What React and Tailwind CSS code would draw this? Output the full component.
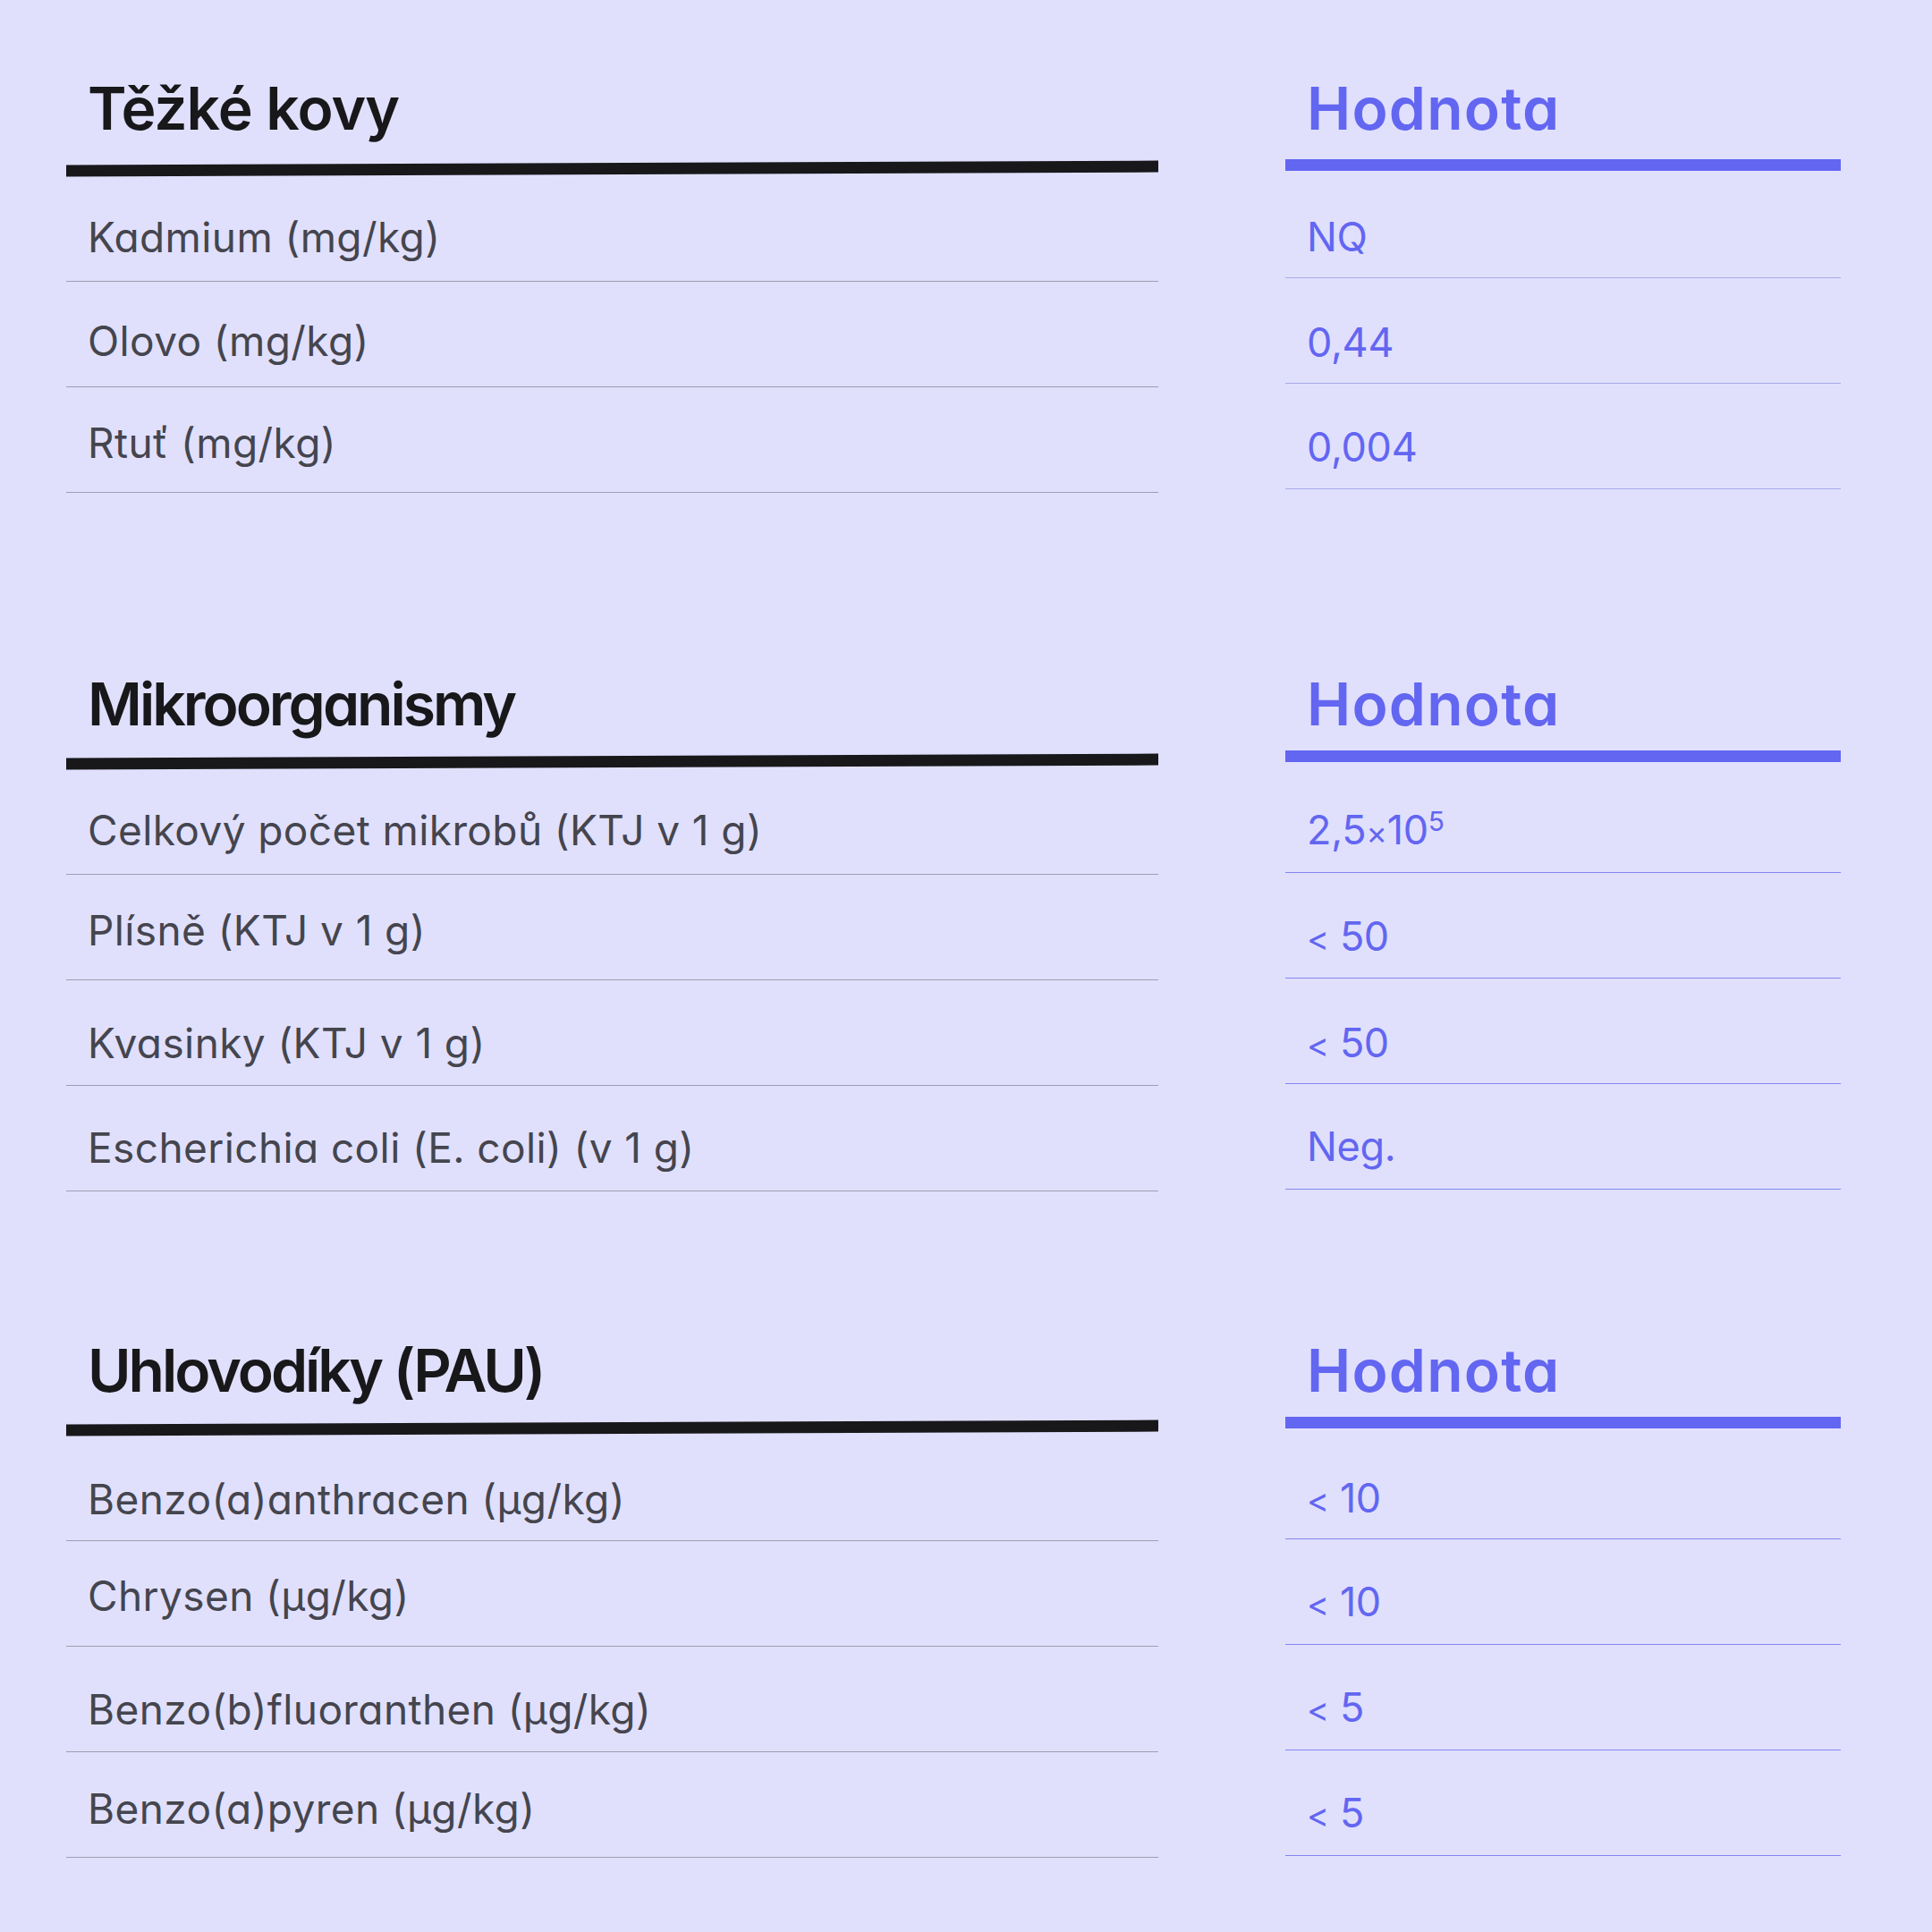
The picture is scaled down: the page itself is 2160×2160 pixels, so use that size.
import React from "react";

const sections = [
  {
    title: "Těžké kovy",
    titleTrack: "tracking-[-1px]",
    top: "pt-[88px]",
    leftHead: "h-[94px]",
    rightHead: "h-[90px]",
    rightGap: "mb-[2px]",
    rightLine: "bg-[#a9aae9]",
    rows: [
      { label: "Kadmium (mg/kg)", value: "NQ", lp: "pt-[45px]", rp: "pt-[49px]" },
      { label: "Olovo (mg/kg)", value: "0,44", lp: "pt-[43px]", rp: "pt-[49px]" },
      { label: "Rtuť (mg/kg)", value: "0,004", lp: "pt-[39px]", rp: "pt-[48px]" },
    ],
  },
  {
    title: "Mikroorganismy",
    titleTrack: "tracking-[-3px]",
    top: "pt-[203px]",
    leftHead: "h-[91px]",
    rightHead: "h-[85px]",
    rightGap: "mb-[6px]",
    rightLine: "bg-[#8486ef]",
    rows: [
      { label: "Celkový počet mikrobů (KTJ v 1 g)", value: "sup", lp: "pt-[45px]", rp: "pt-[47px]" },
      { label: "Plísně (KTJ v 1 g)", value: "< 50", lp: "pt-[39px]", rp: "pt-[48px]" },
      { label: "Kvasinky (KTJ v 1 g)", value: "< 50", lp: "pt-[47px]", rp: "pt-[49px]" },
      { label: "Escherichia coli (E. coli) (v 1 g)", value: "Neg.", lp: "pt-[46px]", rp: "pt-[47px]" },
    ],
  },
  {
    title: "Uhlovodíky (PAU)",
    titleTrack: "tracking-[-3px]",
    top: "pt-[167px]",
    leftHead: "h-[91px]",
    rightHead: "h-[85px]",
    rightGap: "mb-[6px]",
    rightLine: "bg-[#8486ef]",
    rows: [
      { label: "Benzo(a)anthracen (µg/kg)", value: "< 10", lp: "pt-[48px]", rp: "pt-[49px]" },
      { label: "Chrysen (µg/kg)", value: "< 10", lp: "pt-[38px]", rp: "pt-[47px]" },
      { label: "Benzo(b)fluoranthen (µg/kg)", value: "< 5", lp: "pt-[47px]", rp: "pt-[47px]" },
      { label: "Benzo(a)pyren (µg/kg)", value: "< 5", lp: "pt-[40px]", rp: "pt-[47px]" },
    ],
  },
];

function Value({ v }) {
  if (v === "sup") {
    return (
      <span>
        2,5<span className="text-[36px]">×</span>10<sup className="text-[30px]">5</sup>
      </span>
    );
  }
  if (v.startsWith("<")) {
    return (
      <span>
        <span className="text-[38px]">&lt;</span>
        <span className="tracking-[-0.5px]">{v.slice(1)}</span>
      </span>
    );
  }
  return <span>{v}</span>;
}

export default function App() {
  return (
    <div
      className="w-[2160px] h-[2160px] bg-[#e0e0fd] [font-feature-settings:'cv11'] antialiased"
      style={{ fontFamily: "Inter, 'Noto Sans', sans-serif" }}
    >
      {sections.map((s, i) => (
        <section key={i} className={`flex gap-[142px] pl-[74px] ${s.top}`}>
          <div className="w-[1221px]">
            <div className={`${s.leftHead} pl-[24px] text-[66px] leading-none font-semibold text-[#18181b] ${s.titleTrack}`}>
              {s.title}
            </div>
            <div className="h-[13px] mb-[2px] bg-[#18181b] -rotate-[0.23deg]" />
            {s.rows.map((r, j) => (
              <div key={j} className={`h-[118px] ${r.lp} pl-[24px] border-b-[1.5px] border-[#9d9db2]`}>
                <div className="text-[46px] leading-none text-[#45454e] tracking-[0.4px]">{r.label}</div>
              </div>
            ))}
          </div>
          <div className="w-[621px]">
            <div className={`${s.rightHead} pl-[24px] text-[66px] leading-none font-semibold text-[#6366f1] tracking-[1.2px]`}>
              Hodnota
            </div>
            <div className={`h-[13px] bg-[#6366f1] ${s.rightGap}`} />
            {s.rows.map((r, j) => (
              <div key={j} className={`h-[118px] ${r.rp} flex flex-col`}>
                <div className="flex-1 pl-[24px] text-[45px] leading-none text-[#6366f1] tracking-[-0.3px]">
                  <Value v={r.value} />
                </div>
                <div className={`h-[1.5px] ${s.rightLine}`} />
              </div>
            ))}
          </div>
        </section>
      ))}
    </div>
  );
}
